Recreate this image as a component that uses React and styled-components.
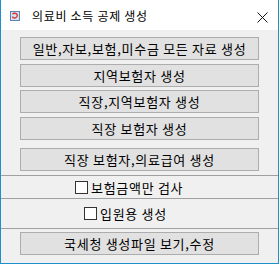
import styled, { createGlobalStyle } from "styled-components";

const GlobalStyle = createGlobalStyle`
  html, body {
    margin: 0;
    padding: 0;
    background: #ffffff;
  }
  * {
    box-sizing: border-box;
  }
`;

const FONT = `"Noto Sans CJK KR", "Noto Sans", sans-serif`;

export default function App() {
  return (
    <>
      <GlobalStyle />
      <Window>
        <TitleBar>
          <AppIcon />
          <Title>의료비 소득 공제 생성</Title>
          <CloseIcon />
        </TitleBar>
        <Body>
          <ButtonList>
            <Button $top={7}>일반,자보,보험,미수금 모든 자료 생성</Button>
            <Button $top={4}>지역보험자 생성</Button>
            <Button $top={3}>직장,지역보험자 생성</Button>
            <Button $top={4}>직장 보험자 생성</Button>
            <Button $top={8}>직장 보험자,의료급여 생성</Button>
          </ButtonList>
          <Divider />
          <CheckRow $height={22} $left={74}>
            <Box />
            <span>보험금액만 검사</span>
          </CheckRow>
          <Divider />
          <CheckRow $height={29} $left={83}>
            <Box />
            <span>입원용 생성</span>
          </CheckRow>
          <Divider />
          <ButtonList>
            <Button $top={3}>국세청 생성파일 보기,수정</Button>
          </ButtonList>
        </Body>
      </Window>
    </>
  );
}

const AppIcon = () => (
  <IconWrap width="10" height="10" viewBox="0 0 10 10">
    <rect x="0.5" y="0.5" width="9" height="9" fill="#d6e2f0" stroke="#5f84b4" />
    <path
      d="M2.5 3.2 C3.5 1.8 6.8 1.8 7.3 4 C7.7 6.2 5 7.6 3 6.6"
      fill="none"
      stroke="#d8322c"
      strokeWidth="1.4"
    />
    <path d="M1.8 5.4 L3.6 5.6 L2.6 7.4 Z" fill="#d8322c" />
  </IconWrap>
);

const CloseIcon = () => (
  <CloseWrap width="11" height="11" viewBox="0 0 11 11">
    <path d="M0.5 0.5 L10.5 10.5 M10.5 0.5 L0.5 10.5" stroke="#111" strokeWidth="1" />
  </CloseWrap>
);

const Window = styled.div`
  width: 279px;
  height: 264px;
  display: flex;
  flex-direction: column;
  border: 1px solid #1d8fc9;
  border-top: none;
  background: #f0f0f0;
  overflow: hidden;
  font-family: ${FONT};
`;

const TitleBar = styled.div`
  height: 30px;
  display: flex;
  align-items: center;
  padding: 0 10px 0 9px;
  background: #ffffff;
  flex-shrink: 0;
`;

const IconWrap = styled.svg`
  display: block;
  margin-top: 2px;
`;

const Title = styled.div`
  margin-left: 12px;
  font-size: 12px;
  letter-spacing: 0.7px;
  color: #000;
  flex: 1;
  line-height: 1;
  margin-top: 1px;
`;

const CloseWrap = styled.svg`
  display: block;
  margin-top: 5px;
`;

const Body = styled.div`
  flex: 1;
  display: flex;
  flex-direction: column;
`;

const ButtonList = styled.div`
  display: flex;
  flex-direction: column;
  padding: 0 19px;
`;

const Button = styled.button`
  margin-top: ${(p) => p.$top}px;
  height: 23px;
  width: 100%;
  padding: 0;
  border: 1px solid #adadad;
  background: #e1e1e1;
  font-family: ${FONT};
  font-size: 13px;
  letter-spacing: 0.7px;
  color: #000;
  line-height: 21px;
  text-align: center;
`;

const Divider = styled.div`
  height: 1px;
  background: #a0a0a0;
  margin-top: 4px;
  flex-shrink: 0;
`;

const CheckRow = styled.label`
  height: ${(p) => p.$height}px;
  display: flex;
  align-items: center;
  padding-left: ${(p) => p.$left}px;
  font-size: 13px;
  letter-spacing: 0.7px;
  color: #000;
  gap: 3px;

  & + ${Divider} {
    margin-top: 0;
  }
`;

const Box = styled.span`
  width: 13px;
  height: 13px;
  border: 1px solid #333;
  background: #fff;
  flex-shrink: 0;
`;
